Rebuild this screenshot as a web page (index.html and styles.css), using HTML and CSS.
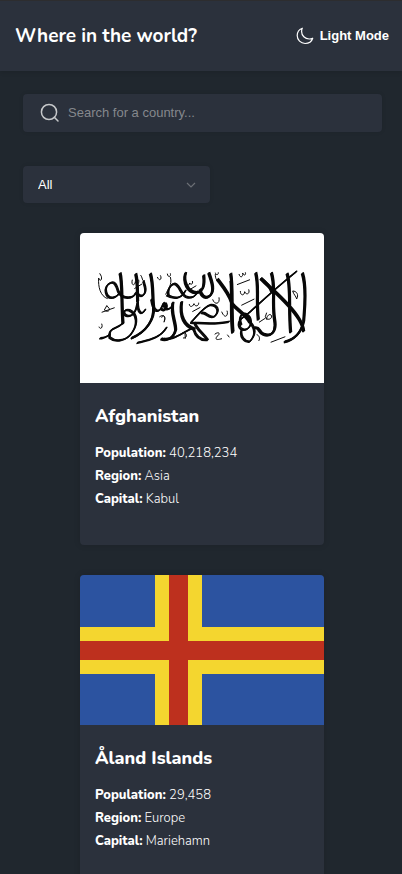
FILE: index.html
```
<!DOCTYPE html>
<html lang="en">
<head>
<meta charset="utf-8">
<meta name="viewport" content="width=device-width, initial-scale=1">
<title>Where in the world?</title>
<link rel="stylesheet" href="styles.css">
</head>
<body>
<header class="site-header">
  <h1 class="site-title">Where in the world?</h1>
  <button class="theme-toggle" type="button">
    <svg class="moon" viewBox="0 0 18 18" aria-hidden="true"><path d="M6.3 1.2C3.3 2.3 1.2 5.2 1.2 8.6c0 4.4 3.5 7.9 7.9 7.9 3.4 0 6.6-2.1 7.6-5.3-1.2.6-2.3.8-3.5.8C9 12 5.6 8.600 5.600 4.400c0-1.100.2-2.200.7-3.200z"/></svg>
    Light Mode
  </button>
</header>
<main class="content">
  <form class="filters">
    <div class="search">
      <svg class="search-icon" viewBox="0 0 20 20" aria-hidden="true"><circle cx="9" cy="9" r="7.600"/><path d="M14.300 14.300L18 18"/></svg>
      <input class="search-input" type="text" placeholder="Search for a country..." aria-label="Search for a country">
    </div>
    <div class="region">
      <select class="region-select" aria-label="Filter by region"><option>All</option><option>Africa</option><option>Americas</option><option>Asia</option><option>Europe</option><option>Oceania</option></select>
      <svg class="chevron" viewBox="0 0 10 6" aria-hidden="true"><path d="M1 1l4 4 4-4"/></svg>
    </div>
  </form>
  <section class="cards">
    <article class="card">
      <svg class="flag" viewBox="0 0 244 150" role="img" aria-label="Flag of Afghanistan">
        <rect width="244" height="150" fill="#fff"/>
        <g class="ink" id="broad-strokes">
          <g transform="translate(12 26) scale(.3333)">
            <path class="heavy" d="M84 42C92 70 88 130 93 195M131 44C138 70 136 110 137 128M175 43C185 75 181 120 185 145C187 180 165 218 118 238"/>
            <path class="mid" d="M84 100C70 122 47 122 42 100C39 88 45 75 55 72M55 72C67 66 73 77 79 98C91 122 125 121 132 100M137 105C150 119 164 105 159 83L154 66M93 192C75 213 48 202 53 236C72 252 107 245 122 218C136 197 138 165 112 154C93 148 91 168 107 171C122 173 132 163 137 128M137 128C137 164 150 171 160 151M178 120C184 160 200 164 210 143L215 132C217 153 229 155 238 144"/>
            <path class="mid" d="M23 238C35 238 44 234 54 226M135 252C165 244 205 239 224 205"/>
          </g>
          <g transform="translate(80 26) scale(.3333)">
            <path class="heavy" d="M77 41C68 70 84 100 108 101C128 100 135 82 131 48M146 41C157 71 165 98 149 111C134 122 120 107 121 90M172 60C191 85 207 104 214 128M212 43C220 85 213 155 219 219M39 130C31 162 47 187 47 213C39 243 15 245 3 239M65 128C58 172 73 202 105 211"/>
            <path class="mid" d="M20 108C43 121 64 121 77 94M26 112C20 90 36 70 48 76C62 85 64 112 82 115C98 118 109 110 112 97M3 150C17 161 25 143 15 132M92 191C123 192 163 198 208 188M93 190C112 171 130 144 151 138C171 137 181 155 164 172C148 182 140 158 124 162M103 190C112 214 127 220 143 243C119 245 106 229 101 211M9 239C43 245 65 221 98 207"/>
          </g>
          <g transform="translate(150 26) scale(.3333)">
            <path class="heavy" d="M77 41C88 83 78 121 85 183M124 41C138 85 125 127 134 184C140 220 123 234 101 226C83 219 91 202 71 207M171 43C184 82 175 145 182 221M217 42C232 88 223 155 221 187C214 221 195 241 163 249M92 58C124 91 178 131 207 180C215 193 220 205 221 218M3 64C7 102 1 160 8 222M4 132C22 154 47 165 60 190"/>
            <path class="mid" d="M200 37C159 70 100 122 61 158C38 178 24 180 27 199C30 214 51 219 61 199C66 183 56 166 43 164C30 164 27 182 34 199M35 211C29 233 43 249 59 248C80 226 74 205 60 190M92 58C107 68 119 80 126 101"/>
          </g>
        </g>
        <use href="#broad-strokes" x="-0.6" y="0.6"/>
        <use href="#broad-strokes" x="0.6" y="-0.6"/>
        <g class="ink">
          <g transform="translate(12 26) scale(.3333)">
            <path class="thin" d="M20 57C23 68 31 65 28 52L23 43M20 57C18 83 25 112 47 119M21 203C24 213 34 207 29 194M45 139L37 153C48 163 61 151 44 141M29 160L68 146M121 62C116 80 129 82 130 68C134 80 143 74 140 62M127 89L150 75M158 65C150 70 152 53 145 48M196 54C203 70 211 59 205 49M202 174C215 164 223 173 216 188"/>
          </g>
          <g transform="translate(80 26) scale(.3333)">
            <path class="thin" d="M22 44C24 58 34 53 31 43M31 54C38 78 22 91 17 107M80 70C77 81 87 83 89 72C94 80 100 73 97 66M89 92L109 80M166 41C168 50 176 48 175 40M166 45C165 59 172 69 183 73M88 135C88 145 98 145 102 134C106 145 117 141 116 131M97 158L121 145M158 121C163 138 181 137 177 115M185 158C196 184 206 167 201 155M5 176C9 164 19 173 12 190M69 237C80 238 83 227 75 222L76 239M164 226C176 216 184 224 170 233C163 247 180 240 186 239M202 227L208 235"/>
          </g>
          <g transform="translate(150 26) scale(.3333)">
            <path class="thin" d="M27 45C30 58 40 55 38 42C42 52 49 48 46 40M21 77L60 62M31 96C31 111 43 111 44 98C49 110 61 104 56 91M34 139L73 120M188 96C200 96 207 107 200 120C198 111 191 107 188 96M110 161L106 173C112 189 131 177 123 168C117 162 107 176 111 183M87 190L107 177M80 227C88 229 91 239 86 246M122 250L166 233"/>
          </g>
        </g>
      </svg>
      <div class="card-body">
        <h2 class="country">Afghanistan</h2>
        <p class="fact"><strong>Population:</strong> 40,218,234</p>
        <p class="fact"><strong>Region:</strong> Asia</p>
        <p class="fact"><strong>Capital:</strong> Kabul</p>
      </div>
    </article>
    <article class="card">
      <svg class="flag" viewBox="0 0 244 150" role="img" aria-label="Flag of Åland Islands">
        <rect width="244" height="150" fill="#2c53a0"/>
        <path d="M75 0h47v150H75zM0 52h244v47H0z" fill="#f4d62f"/>
        <path d="M89 0h19v150H89zM0 66h244v19H0z" fill="#bd301e"/>
      </svg>
      <div class="card-body">
        <h2 class="country">Åland Islands</h2>
        <p class="fact"><strong>Population:</strong> 29,458</p>
        <p class="fact"><strong>Region:</strong> Europe</p>
        <p class="fact"><strong>Capital:</strong> Mariehamn</p>
      </div>
    </article>
  </section>
</main>
</body>
</html>
```
FILE: styles.css
```
* {
  box-sizing: border-box;
}

body {
  margin: 0;
  background: #20272e;
  color: #fff;
  font-family: Nunito, "Open Sans", sans-serif;
}

.site-header {
  display: flex;
  align-items: center;
  justify-content: space-between;
  height: 71px;
  padding: 0 13px 0 15px;
  border-top: 1px solid #2d2d2f;
  background: #2b313c;
  box-shadow: 0 2px 4px rgba(0, 0, 0, 0.1);
}

.site-title {
  margin: 0;
  font-size: 19px;
  line-height: 24px;
  font-weight: 700;
}

.theme-toggle {
  display: flex;
  align-items: center;
  gap: 6px;
  padding: 0;
  border: 0;
  background: none;
  color: #fff;
  font: bold 13px/18px "Liberation Sans", sans-serif;
}

.moon {
  width: 18px;
  height: 18px;
  fill: none;
  stroke: #fff;
  stroke-width: 1.2;
  stroke-linejoin: round;
}

.filters {
  display: flex;
  flex-direction: column;
  gap: 34px;
  padding: 23px 20px 30px 23px;
}

.search {
  display: flex;
  align-items: center;
  gap: 8px;
  height: 38px;
  padding: 0 17px;
  border-radius: 4px;
  background: #2b313c;
  box-shadow: 0 0 4px rgba(0, 0, 0, 0.1);
}

.search-icon {
  flex: none;
  width: 20px;
  height: 20px;
  fill: none;
  stroke: #c6c8ca;
  stroke-width: 1.5;
  stroke-linecap: round;
}

.search-input {
  flex: 1;
  min-width: 0;
  padding: 0;
  border: 0;
  outline: 0;
  background: none;
  color: #fff;
  font: 13px/18px "Liberation Sans", sans-serif;
}

.search-input::placeholder {
  color: #85888d;
  opacity: 1;
}

.region {
  display: grid;
  align-items: center;
  width: 187px;
}

.region-select,
.chevron {
  grid-area: 1 / 1;
}

.region-select {
  appearance: none;
  width: 100%;
  height: 37px;
  padding: 0 15px;
  border: 0;
  border-radius: 4px;
  background: #2b313c;
  color: #fff;
  font: 13px/18px "Liberation Sans", sans-serif;
  box-shadow: 0 0 4px rgba(0, 0, 0, 0.1);
}

.chevron {
  justify-self: end;
  width: 10px;
  height: 6px;
  margin-right: 14px;
  fill: none;
  stroke: #6b6f75;
  stroke-width: 1.2;
  pointer-events: none;
}

.cards {
  display: grid;
  grid-template-columns: repeat(auto-fit, 244px);
  justify-content: center;
  gap: 30px;
  padding: 0 20px 30px 22px;
}

.card {
  overflow: hidden;
  border-radius: 4px;
  background: #2b313c;
  box-shadow: 0 0 6px rgba(0, 0, 0, 0.15);
}

.flag {
  display: block;
  width: 100%;
}

.ink path {
  fill: none;
  stroke: #080808;
  stroke-linejoin: round;
}

.ink .heavy {
  stroke-width: 6px;
}

.ink .mid {
  stroke-width: 4px;
}

.ink .thin {
  stroke-width: 3px;
}

.card-body {
  padding: 21px 15px 34px;
}

.country {
  margin: 0 0 13px;
  font-size: 18px;
  line-height: 25px;
  font-weight: 800;
}

.fact {
  margin: 0;
  font-size: 13px;
  line-height: 23px;
  font-weight: 300;
}

.fact strong {
  font-weight: 800;
}
```
